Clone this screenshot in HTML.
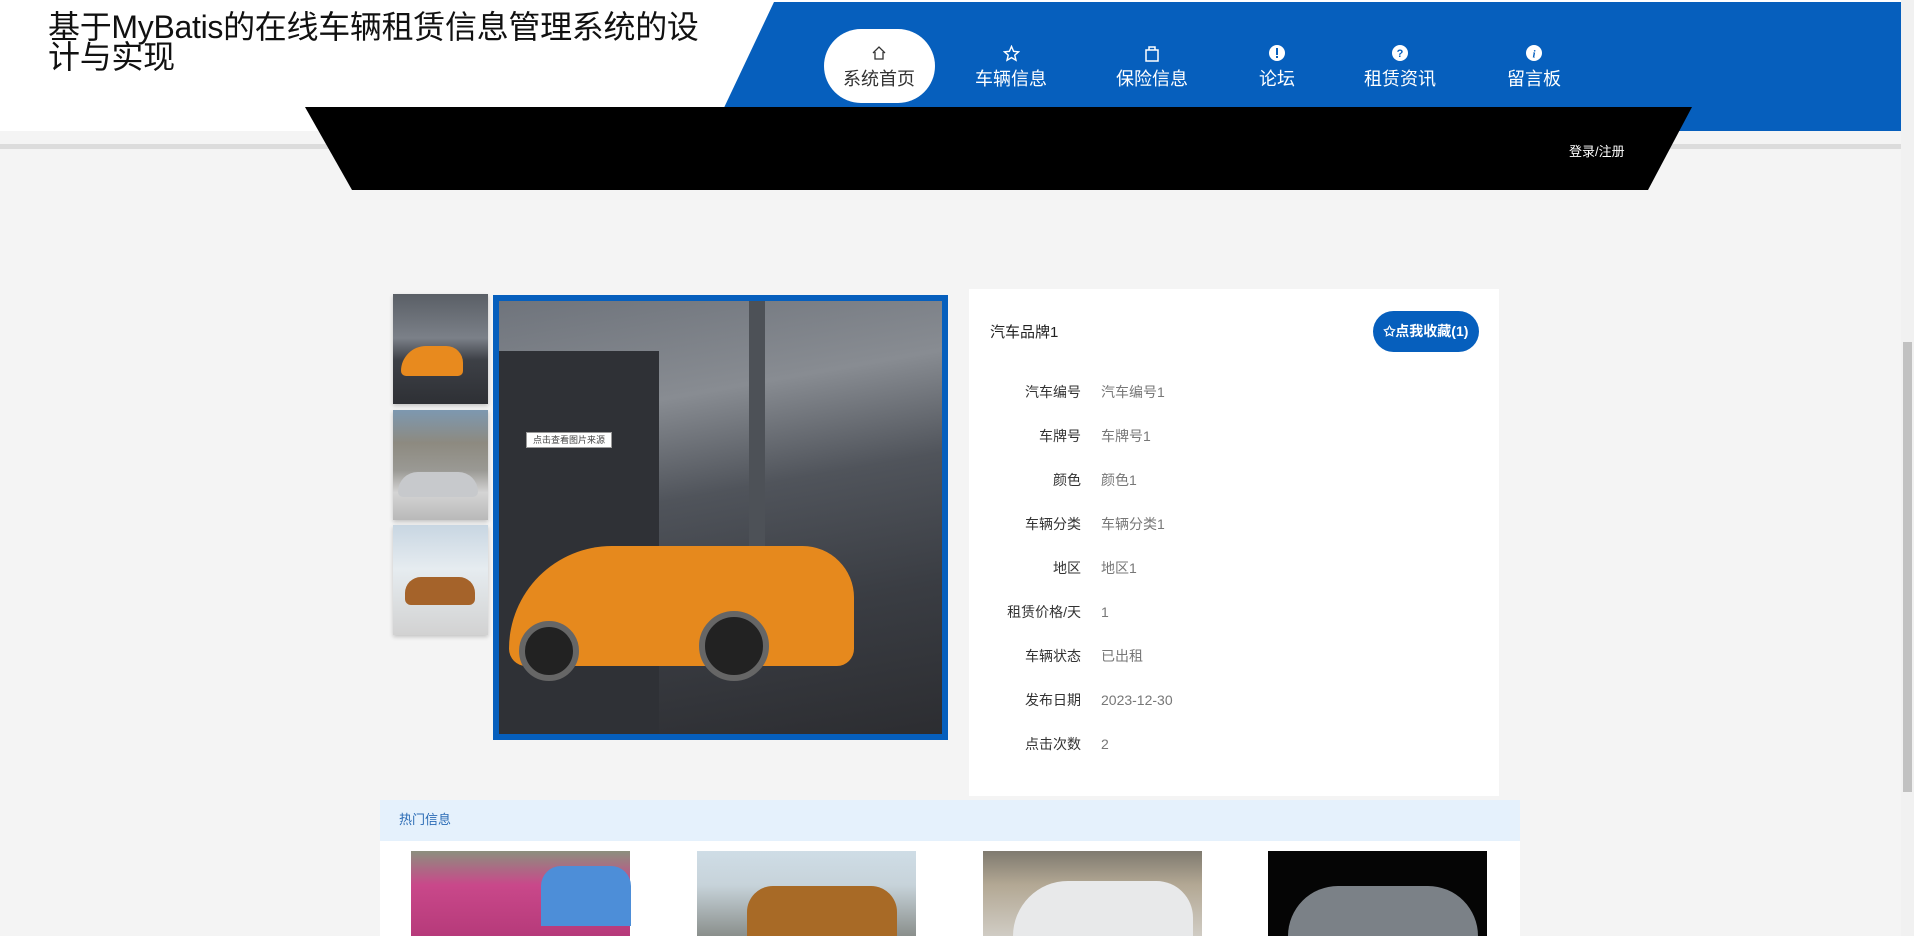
<!DOCTYPE html>
<html><head><meta charset="utf-8"><style>
*{margin:0;padding:0;box-sizing:border-box}
body{width:1914px;height:936px;overflow:hidden;background:#f4f4f4;font-family:"Liberation Sans","Noto Sans CJK SC",sans-serif;position:relative}
.abs{position:absolute}
.nav{position:absolute;top:0;color:#fff;font-size:18px;text-align:center;width:120px;margin-left:-60px}
.nav .ic{height:22px;margin-top:42px;display:flex;justify-content:center;align-items:center}
.nav .t{margin-top:4px;line-height:22px}
.row{position:absolute;left:969px;width:530px;font-size:14px;height:20px;line-height:20px}
.row .l{position:absolute;right:418px;color:#333;white-space:nowrap}
.row .v{position:absolute;left:132px;color:#777}
.thumb{position:absolute;left:393px;width:95px;box-shadow:0 2px 4px rgba(0,0,0,.2)}
</style></head><body>
<div class="abs" style="left:0;top:0;width:1901px;height:131px;background:#fff"></div>
<div class="abs" style="left:0;top:144px;width:1901px;height:5px;background:#dcdcdc"></div>
<svg class="abs" style="left:0;top:0" width="1914" height="200">
<polygon points="774,2 1901,2 1901,131 713,131" fill="#065fbd"/>
<polygon points="305,107 1692,107 1648,190 352,190" fill="#000"/>
</svg>
<div class="abs" style="left:48px;top:12px;font-size:32px;line-height:30px;color:#111;white-space:nowrap;letter-spacing:-0.3px">基于MyBatis的在线车辆租赁信息管理系统的设<br>计与实现</div>
<div class="abs" style="left:824px;top:29px;width:111px;height:74px;background:#fff;border-radius:40px"></div>
<div class="nav" style="left:879px;color:#333"><div class="ic"><svg width="16" height="16" viewBox="0 0 16 16"><path d="M2 8 L8 2 L14 8 M4 7 V14 H12 V7" fill="none" stroke="#333" stroke-width="1.3"/></svg></div><div class="t">系统首页</div></div>
<div class="nav" style="left:1011px"><div class="ic"><svg width="17" height="17" viewBox="0 0 24 24"><path d="M12 2l3 7 7 .6-5.4 4.7 1.7 7.2L12 17.8 5.7 21.5l1.7-7.2L2 9.6 9 9z" fill="none" stroke="#fff" stroke-width="2"/></svg></div><div class="t">车辆信息</div></div>
<div class="nav" style="left:1152px"><div class="ic"><svg width="14" height="17" viewBox="0 0 14 17"><path d="M1 5H13V16H1Z M4 5V2H10V5" fill="none" stroke="#fff" stroke-width="1.5"/></svg></div><div class="t">保险信息</div></div>
<div class="nav" style="left:1277px"><div class="ic"><svg width="16" height="16"><circle cx="8" cy="8" r="8" fill="#fff"/><rect x="7" y="3" width="2" height="7" fill="#065fbd"/><rect x="7" y="11" width="2" height="2" fill="#065fbd"/></svg></div><div class="t">论坛</div></div>
<div class="nav" style="left:1400px"><div class="ic"><svg width="16" height="16"><circle cx="8" cy="8" r="8" fill="#fff"/><text x="8" y="12" font-size="11" font-weight="bold" text-anchor="middle" fill="#065fbd" font-family="Liberation Sans">?</text></svg></div><div class="t">租赁资讯</div></div>
<div class="nav" style="left:1534px"><div class="ic"><svg width="16" height="16"><circle cx="8" cy="8" r="8" fill="#fff"/><text x="8" y="12.5" font-size="11" font-style="italic" font-weight="bold" text-anchor="middle" fill="#065fbd" font-family="Liberation Serif">i</text></svg></div><div class="t">留言板</div></div>
<div class="abs" style="left:1569px;top:141px;color:#fff;font-size:13px">登录/注册</div>
<div class="abs" style="left:1901px;top:0;width:13px;height:936px;background:#f1f1f1"></div>
<div class="abs" style="left:1903px;top:342px;width:9px;height:450px;background:#c1c1c1"></div>
<div class="thumb" style="top:294px;height:110px;background:linear-gradient(180deg,#5a5f66 0%,#7b8088 40%,#3d4046 60%,#2e3035 100%)"><div class="abs" style="left:8px;top:52px;width:62px;height:30px;background:#e88a1e;border-radius:30px 20px 6px 6px"></div></div>
<div class="thumb" style="top:410px;height:110px;background:linear-gradient(180deg,#7d98b0 0%,#8d8a80 30%,#9a9994 55%,#d4d4d4 75%,#b9b9b9 100%)"><div class="abs" style="left:5px;top:62px;width:80px;height:25px;background:#c7c9cc;border-radius:30px 30px 8px 8px"></div></div>
<div class="thumb" style="top:525px;height:110px;background:linear-gradient(180deg,#c8d6e2 0%,#e6ecf0 40%,#d2d2d2 100%)"><div class="abs" style="left:12px;top:52px;width:70px;height:28px;background:#a5632a;border-radius:16px 16px 6px 6px"></div></div>
<div class="abs" style="left:493px;top:295px;width:455px;height:445px;border:6px solid #065fbd;background:linear-gradient(170deg,#6f747c 0%,#888c92 25%,#50545b 45%,#3a3d43 70%,#2c2d31 100%);overflow:hidden">
<div class="abs" style="left:0;top:50px;width:160px;height:400px;background:#2f3136"></div>
<div class="abs" style="left:250px;top:0;width:16px;height:280px;background:#4d5157"></div>
<div class="abs" style="left:10px;top:245px;width:345px;height:120px;background:#e6891d;border-radius:120px 60px 20px 20px"></div>
<div class="abs" style="left:20px;top:320px;width:60px;height:60px;border-radius:50%;background:#222;border:6px solid #666"></div>
<div class="abs" style="left:200px;top:310px;width:70px;height:70px;border-radius:50%;background:#222;border:6px solid #666"></div>
<div class="abs" style="left:27px;top:131px;width:86px;height:16px;background:#fff;border:1px solid #999;font-size:9px;line-height:14px;color:#444;text-align:center">点击查看图片来源</div>
</div>
<div class="abs" style="left:969px;top:289px;width:530px;height:507px;background:#fff"></div>
<div class="abs" style="left:990px;top:321px;font-size:15px;color:#222">汽车品牌1</div>
<div class="abs" style="left:1373px;top:311px;width:106px;height:41px;border-radius:21px;background:#065fbd;color:#fff;font-size:14px;font-weight:bold;line-height:41px;text-align:center">✩点我收藏(1)</div>
<div class="row" style="top:382px"><span class="l">汽车编号</span><span class="v">汽车编号1</span></div>
<div class="row" style="top:426px"><span class="l">车牌号</span><span class="v">车牌号1</span></div>
<div class="row" style="top:470px"><span class="l">颜色</span><span class="v">颜色1</span></div>
<div class="row" style="top:514px"><span class="l">车辆分类</span><span class="v">车辆分类1</span></div>
<div class="row" style="top:558px"><span class="l">地区</span><span class="v">地区1</span></div>
<div class="row" style="top:602px"><span class="l">租赁价格/天</span><span class="v">1</span></div>
<div class="row" style="top:646px"><span class="l">车辆状态</span><span class="v">已出租</span></div>
<div class="row" style="top:690px"><span class="l">发布日期</span><span class="v">2023-12-30</span></div>
<div class="row" style="top:734px"><span class="l">点击次数</span><span class="v">2</span></div>
<div class="abs" style="left:380px;top:800px;width:1140px;height:41px;background:#e5f1fc"></div>
<div class="abs" style="left:399px;top:810px;font-size:13px;color:#2a6bb5;line-height:20px">热门信息</div>
<div class="abs" style="left:380px;top:841px;width:1140px;height:95px;background:#fff"></div>
<div class="abs" style="left:411px;top:851px;width:219px;height:85px;background:linear-gradient(180deg,#8c8f7e 0%,#c9488a 40%,#b63a7a 100%)"><div class="abs" style="left:130px;top:15px;width:90px;height:60px;background:#4d8ed8;border-radius:20px 20px 0 0"></div></div>
<div class="abs" style="left:697px;top:851px;width:219px;height:85px;background:linear-gradient(180deg,#cfdde6 0%,#c7d3da 40%,#8a8f8c 100%)"><div class="abs" style="left:50px;top:35px;width:150px;height:50px;background:#a86a26;border-radius:26px 26px 0 0"></div></div>
<div class="abs" style="left:983px;top:851px;width:219px;height:85px;background:linear-gradient(180deg,#7f7a6f 0%,#b3a894 40%,#d0ccc4 100%)"><div class="abs" style="left:30px;top:30px;width:180px;height:55px;background:#e8e9ea;border-radius:60px 40px 0 0"></div></div>
<div class="abs" style="left:1268px;top:851px;width:219px;height:85px;background:#050505"><div class="abs" style="left:20px;top:35px;width:190px;height:50px;background:#7b8187;border-radius:60px 60px 0 0"></div></div>
</body></html>
